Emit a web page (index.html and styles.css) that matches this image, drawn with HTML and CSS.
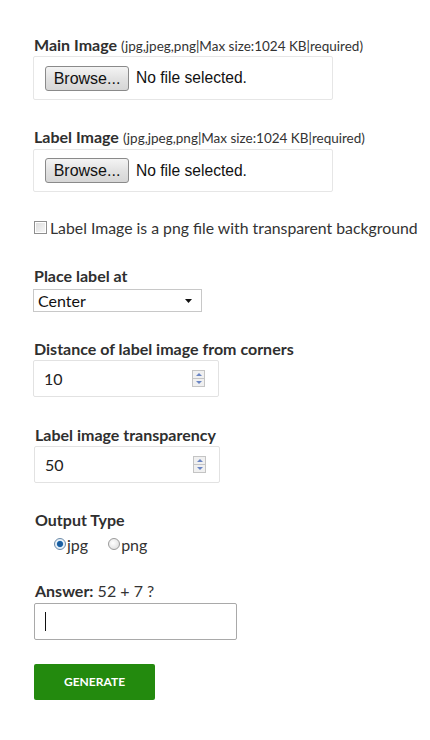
FILE: index.html
```html
<!DOCTYPE html>
<html>
<head>
<meta charset="utf-8">
<link rel="stylesheet" href="styles.css">
</head>
<body>
<form class="form">
  <div class="label l-main"><b>Main Image</b> <span class="hint">(jpg,jpeg,png|Max size:1024 KB|required)</span></div>
  <div class="filebox fb-main"><span class="browse">Browse...</span><span class="nofile">No file selected.</span></div>

  <div class="label l-labelimg"><b>Label Image</b> <span class="hint">(jpg,jpeg,png|Max size:1024 KB|required)</span></div>
  <div class="filebox fb-label"><span class="browse">Browse...</span><span class="nofile">No file selected.</span></div>

  <div class="check-row"><span class="checkbox"></span><span>Label Image is a png file with transparent background</span></div>

  <div class="label l-place"><b>Place label at</b></div>
  <div class="select"><span>Center</span><svg class="caret" width="7" height="4" viewBox="0 0 7 4"><path d="M0 0H7L3.5 4Z" fill="#111"/></svg></div>

  <div class="label l-dist"><b>Distance of label image from corners</b></div>
  <div class="numbox nb-dist"><span>10</span><span class="spin"><span class="up"></span><span class="down"></span></span></div>

  <div class="shift">
    <div class="label l-trans"><b>Label image transparency</b></div>
    <div class="numbox nb-trans"><span>50</span><span class="spin"><span class="up"></span><span class="down"></span></span></div>

    <div class="label l-out"><b>Output Type</b></div>
    <div class="radio-row">
      <span class="radio on"></span><span class="rtext">jpg</span>
      <span class="radio"></span><span class="rtext">png</span>
    </div>

    <div class="label l-ans"><b>Answer:</b> 52 + 7 ?</div>
    <div class="answer"><span class="cursor"></span></div>

    <div class="generate">GENERATE</div>
  </div>
</form>
</body>
</html>
```

FILE: styles.css
```css
html, body {
  margin: 0;
  padding: 0;
  background: #fff;
}
body {
  font-family: Lato, "Open Sans", sans-serif;
  color: #333;
}
.form {
  padding: 36px 0 40px 33px;
}
.label {
  height: 18px;
  line-height: 18px;
  font-size: 16px;
  padding-left: 1px;
  white-space: nowrap;
}
.label b {
  font-weight: 700;
  color: #2f2f2f;
}
.hint {
  font-size: 13.5px;
}
.filebox {
  box-sizing: border-box;
  width: 300px;
  height: 44px;
  border: 1px solid #e6e6e6;
  border-radius: 2px;
  display: flex;
  align-items: center;
  padding-left: 11px;
}
.fb-main { margin-top: 2px; }
.l-labelimg { margin-top: 28px; }
.fb-label { margin-top: 3px; height: 43px; }
.browse {
  box-sizing: border-box;
  height: 25px;
  width: 84px;
  border: 1px solid #8a8a8a;
  border-radius: 3px;
  background: linear-gradient(#f4f4f4, #e2e2e2 50%, #d6d6d6);
  font-family: "Liberation Sans", Arial, sans-serif;
  font-size: 16px;
  line-height: 23px;
  color: #111;
  text-align: center;
}
.nofile {
  margin-left: 7px;
  font-family: "Liberation Sans", Arial, sans-serif;
  font-size: 15.6px;
  color: #111;
}
.check-row {
  margin-top: 25px;
  height: 20px;
  display: flex;
  align-items: center;
  font-size: 15.8px;
  padding-left: 1px;
  color: #333;
  white-space: nowrap;
}
.checkbox {
  box-sizing: border-box;
  width: 13px;
  height: 13px;
  border: 1px solid #8f8f8f;
  background: linear-gradient(135deg, #dcdcdc, #f8f8f8);
  box-shadow: inset 0 0 0 1px #fff;
  margin-right: 3px;
}
.l-place { margin-top: 30px; }
.select {
  box-sizing: border-box;
  margin-top: 4px;
  width: 169px;
  height: 23px;
  border: 1px solid #c8c8c8;
  display: flex;
  align-items: center;
  justify-content: space-between;
  padding: 0 9px 0 4px;
  font-size: 16px;
  color: #111;
}
.caret { margin-top: 1px; }
.l-dist { margin-top: 28px; }
.numbox {
  box-sizing: border-box;
  margin-top: 2px;
  width: 186px;
  height: 37px;
  border: 1px solid #e2e2e2;
  border-radius: 2px;
  display: flex;
  align-items: center;
  justify-content: space-between;
  padding: 0 13px 0 10px;
  font-size: 16px;
  color: #222;
}
.spin {
  display: flex;
  flex-direction: column;
  width: 13px;
  height: 17px;
  border: 1px solid #c4c4c4;
  box-sizing: border-box;
  background: #f0f0f0;
}
.spin .up, .spin .down {
  flex: 1;
  position: relative;
}
.spin .up { border-bottom: 1px solid #c4c4c4; }
.spin .up::after, .spin .down::after {
  content: "";
  position: absolute;
  left: 3px;
  top: 2px;
  border-left: 3px solid transparent;
  border-right: 3px solid transparent;
}
.spin .up::after { border-bottom: 3px solid #6a85c4; }
.spin .down::after { border-top: 3px solid #6a85c4; }
.shift { margin-left: 1px; }
.l-trans { margin-top: 29px; }
.nb-trans { margin-top: 2px; }
.l-out { margin-top: 28px; }
.radio-row {
  margin-top: 6px;
  height: 18px;
  display: flex;
  align-items: center;
  padding-left: 20px;
  font-size: 16px;
  color: #333;
}
.radio {
  box-sizing: border-box;
  width: 12px;
  height: 12px;
  border-radius: 50%;
  border: 1px solid #9a9a9a;
  background: radial-gradient(circle at 40% 40%, #fff, #d8d8d8);
}
.radio.on {
  background: radial-gradient(circle, #1a5c9e 0 2.5px, #4b94d0 3px, #e8f0f8 3.6px);
  border-color: #6b8aa8;
}
.rtext { margin-left: 1px; margin-right: 20px; }
.l-ans { margin-top: 29px; }
.answer {
  box-sizing: border-box;
  margin-top: 3px;
  width: 203px;
  height: 37px;
  border: 1px solid #a9a9a9;
  border-radius: 2px;
  display: flex;
  align-items: center;
  padding-left: 10px;
}
.cursor {
  width: 1px;
  height: 19px;
  background: #111;
}
.generate {
  margin-top: 24px;
  width: 121px;
  height: 36px;
  background: #238a0e;
  border-radius: 2px;
  color: #fff;
  font-size: 12px;
  font-weight: 700;
  line-height: 36px;
  text-align: center;
}
```
